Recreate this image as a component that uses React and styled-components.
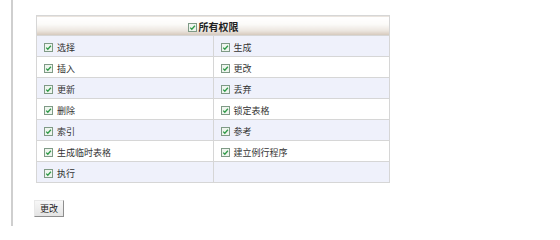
import React from 'react';
import styled, { createGlobalStyle } from 'styled-components';

const GlobalStyle = createGlobalStyle`
  html, body {
    margin: 0;
    padding: 0;
    background: #ffffff;
  }
  body {
    font-family: "Noto Sans CJK SC", "Liberation Sans", sans-serif;
    color: #333;
  }
`;

const Page = styled.div`
  width: 560px;
  height: 226px;
  box-sizing: border-box;
  padding-left: 11px;
  overflow: hidden;
`;

const Panel = styled.div`
  height: 100%;
  border-left: 2px solid #cfcfcf;
  padding: 15px 0 0 23px;
  box-sizing: border-box;
`;

const Grid = styled.table`
  width: 354px;
  border-collapse: collapse;
  border: 1px solid #d6d6d6;
  table-layout: fixed;
`;

const HeadCell = styled.th`
  height: 19px;
  padding: 0;
  background: linear-gradient(to bottom, #ffffff 0%, #fcfbf9 40%, #ece6df 75%, #d3c6b9 100%);
  border-bottom: 1px solid #d6d6d6;
  font-size: 10px;
  font-weight: bold;
  color: #222;
  text-align: center;
`;

const Row = styled.tr`
  background: ${p => (p.$odd ? '#eff1fb' : '#ffffff')};
`;

const Cell = styled.td`
  height: 20px;
  padding: 0 0 0 7px;
  border-top: 1px solid #d6d6d6;
  border-left: 1px solid #d6d6d6;
  font-size: 9px;
  color: #333;
`;

const Label = styled.span`
  display: inline-flex;
  align-items: center;
  gap: ${p => (p.$tight ? '2px' : '4px')};
  line-height: 1;
  vertical-align: middle;
`;

const Footer = styled.div`
  display: flex;
  padding-top: 17px;
`;

const Button = styled.button`
  height: 17px;
  padding: 0 5px;
  margin-left: -2px;
  font-family: "Noto Sans CJK SC", sans-serif;
  font-size: 9px;
  line-height: 1;
  color: #222;
  background: linear-gradient(to bottom, #f7f7f7, #e4e4e4);
  border: 1px solid;
  border-color: #e8e8e8 #8e8e8e #8e8e8e #e8e8e8;
  border-radius: 0;
`;

function Check() {
  return (
    <svg width="9" height="9" viewBox="0 0 9 9">
      <rect x="0.5" y="0.5" width="8" height="8" fill="#eef5ee" stroke="#7f9a86" />
      <path d="M2.2 4.6 L3.8 6.2 L6.9 2.8" fill="none" stroke="#2f9a48" strokeWidth="1.3" />
    </svg>
  );
}

const rows = [
  ['选择', '生成'],
  ['插入', '更改'],
  ['更新', '丢弃'],
  ['删除', '锁定表格'],
  ['索引', '参考'],
  ['生成临时表格', '建立例行程序'],
  ['执行', null],
];

export default function App() {
  return (
    <Page>
      <GlobalStyle />
      <Panel>
        <Grid>
          <thead>
            <tr>
              <HeadCell colSpan={2}>
                <Label $tight><Check />所有权限</Label>
              </HeadCell>
            </tr>
          </thead>
          <tbody>
            {rows.map((r, i) => (
              <Row key={i} $odd={i % 2 === 0}>
                {r.map((name, j) => (
                  <Cell key={j}>
                    {name && <Label><Check />{name}</Label>}
                  </Cell>
                ))}
              </Row>
            ))}
          </tbody>
        </Grid>
        <Footer>
          <Button>更改</Button>
        </Footer>
      </Panel>
    </Page>
  );
}
